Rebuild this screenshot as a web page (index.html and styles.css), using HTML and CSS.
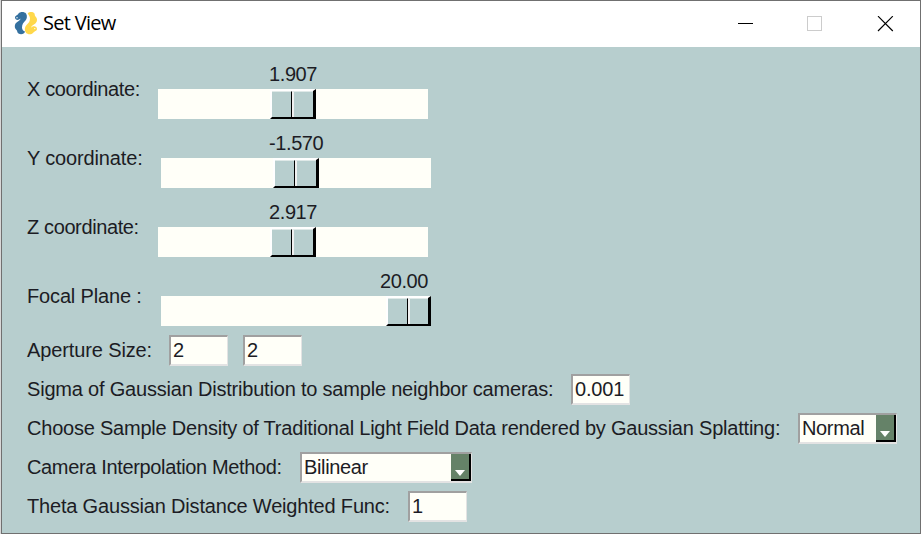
FILE: index.html
```
<!DOCTYPE html>
<html lang="en">
<head>
<meta charset="utf-8">
<title>Set View</title>
<link rel="stylesheet" href="styles.css">
</head>
<body>
<div class="window">
  <header class="titlebar">
    <svg class="logo" width="24" height="24" viewBox="0 0 24 24">
      <path fill="#34709f" d="M4.500 2.500C6 .5 10.500 .5 12 2.500C13.500 4.500 13 8 11.500 9.500C9.500 11.500 8 13 8 16.500C8 19 9.500 20 11 20.500C10.500 23 7 24 4.500 22.500C3 21.500 3.500 20 2.500 19C.5 17.500 .2 14 2 12C4 10 6.500 9.500 6.500 7.500C5 9.500 1 9.500 1 6.500C1 4.500 3.500 4.500 4.500 2.500Z"/>
      <path fill="#ffd84b" d="M13.700 2.500C15 .6 19 .5 20.300 2.300C21 3.500 20.500 4.500 21.500 5.500C23.500 7.500 23.500 10 21.800 12C20 14 17.300 14.500 17.300 16.700C19 14.500 23 15 23 18C23 19.800 20 20.500 19 22C17.500 23.800 13.500 23.700 12 21.800C10.200 19.500 10.500 16 12.500 14C14.500 12 16 10.500 16 7.500C16 5 14.500 4 13.700 2.500Z"/>
      <circle cx="3" cy="6.800" r=".7" fill="#fff"/><circle cx="20.800" cy="17.600" r=".7" fill="#fff"/>
    </svg>
    <h1 class="title">Set View</h1>
    <svg class="controls" width="156" height="16" viewBox="0 0 156 16" fill="none" shape-rendering="crispEdges">
      <path stroke="#000" d="M0 7.500H15"/>
      <rect x="69.500" y=".5" width="14" height="14" stroke="#ccc"/>
      <path stroke="#000" stroke-width="1.200" shape-rendering="auto" d="M140 .2L154.800 15M154.800 .2L140 15"/>
    </svg>
  </header>
  <main class="form">
    <div class="row slider-row"><span class="label label-x">X coordinate:</span><div class="slider middle"><span class="value">1.907</span><div class="track"><div class="thumb"><i></i><i></i></div></div></div></div>
    <div class="row slider-row"><span class="label label-y">Y coordinate:</span><div class="slider middle"><span class="value negative">-1.570</span><div class="track"><div class="thumb"><i></i><i></i></div></div></div></div>
    <div class="row slider-row"><span class="label label-x">Z coordinate:</span><div class="slider middle"><span class="value">2.917</span><div class="track"><div class="thumb"><i></i><i></i></div></div></div></div>
    <div class="row slider-row"><span class="label label-y">Focal Plane :</span><div class="slider end"><span class="value">20.00</span><div class="track"><div class="thumb"><i></i><i></i></div></div></div></div>
    <div class="row"><span class="label label-aperture">Aperture Size:</span><div class="field">2</div><div class="field">2</div></div>
    <div class="row"><span class="label label-sigma">Sigma of Gaussian Distribution to sample neighbor cameras:</span><div class="field">0.001</div></div>
    <div class="row"><span class="label label-density">Choose Sample Density of Traditional Light Field Data rendered by Gaussian Splatting:</span><div class="field select density">Normal<span class="arrow"></span></div></div>
    <div class="row"><span class="label label-method">Camera Interpolation Method:</span><div class="field select method">Bilinear<span class="arrow"></span></div></div>
    <div class="row"><span class="label label-theta">Theta Gaussian Distance Weighted Func:</span><div class="field">1</div></div>
  </main>
</div>
</body>
</html>
```
FILE: styles.css
```
* { box-sizing: border-box; }
body { margin: 0; width: 921px; height: 534px; overflow: hidden; background: #d8d8d8; }
.window { width: 920px; height: 534px; margin-left: 1px; border: 1px solid #707070; background: #b7cece; }
.titlebar { display: flex; align-items: center; height: 46px; padding: 0 26px 0 12px; background: #fff; }
.logo { margin-top: -2px; }
.title { margin: -3px auto 0 5px; font: 400 20px "Open Sans", sans-serif; letter-spacing: -0.7px; color: #000; }
.controls { margin-top: -1px; }
.form { padding: 8px 0 0 25px; font: 20px/30px "Liberation Sans", Arial, sans-serif; letter-spacing: -0.2px; color: #1c1c24; }
.row { display: flex; align-items: center; height: 39px; white-space: nowrap; }
.slider-row { height: 69px; }
.label { flex: none; margin-top: -1px; }
.label-x { width: 131px; letter-spacing: -0.38px; }
.label-y { width: 134px; letter-spacing: -0.15px; }
.label-aperture { width: 142px; letter-spacing: -0.12px; }
.label-sigma { width: 544px; }
.label-density { width: 771px; letter-spacing: -0.215px; }
.label-method { width: 273px; letter-spacing: -0.35px; }
.label-theta { width: 381px; letter-spacing: -0.18px; }
.slider { display: flex; flex-direction: column; width: 270px; height: 69px; padding-top: 4px; }
.value { width: 48px; margin-left: 111px; letter-spacing: -0.4px; }
.negative { width: 54px; margin-left: 108px; }
.end .value { margin-left: 219px; }
.track { height: 30px; background: #fffff8; }
.thumb { display: flex; width: 45px; height: 30px; margin-left: 113px; border: 3px solid; border-width: 2px 3px 2px 2px; border-color: #fff #000 #000 #fff; }
.thumb i { flex: 1; border-top: 1px solid #dfe9e8; background: #b7cece; }
.thumb i:first-child { border-right: 1px solid #000; }
.thumb i:last-child { border-left: 2px solid #f0f0f0; }
.middle .thumb { width: 46px; margin-left: 112px; }
.end .thumb { margin-left: 225px; }
.field { width: 59px; height: 31px; margin-right: 15px; padding-left: 2px; line-height: 27px; border: 1px solid; border-width: 2px 1px 2px 2px; border-color: #a0a0a0 #e3e3e3 #e3e3e3 #a0a0a0; background: #fffff8; }
.select { display: flex; justify-content: space-between; letter-spacing: -0.35px; }
.density { width: 99px; }
.method { width: 172px; }
.arrow { display: flex; justify-content: center; align-items: flex-end; width: 20px; height: 27px; padding-bottom: 3px; background: #658268; border-right: 2px solid #000; border-bottom: 2px solid #000; }
.arrow::after { content: ""; border: 5px solid transparent; border-top: 6px solid #fff; border-bottom: 0; }
```
